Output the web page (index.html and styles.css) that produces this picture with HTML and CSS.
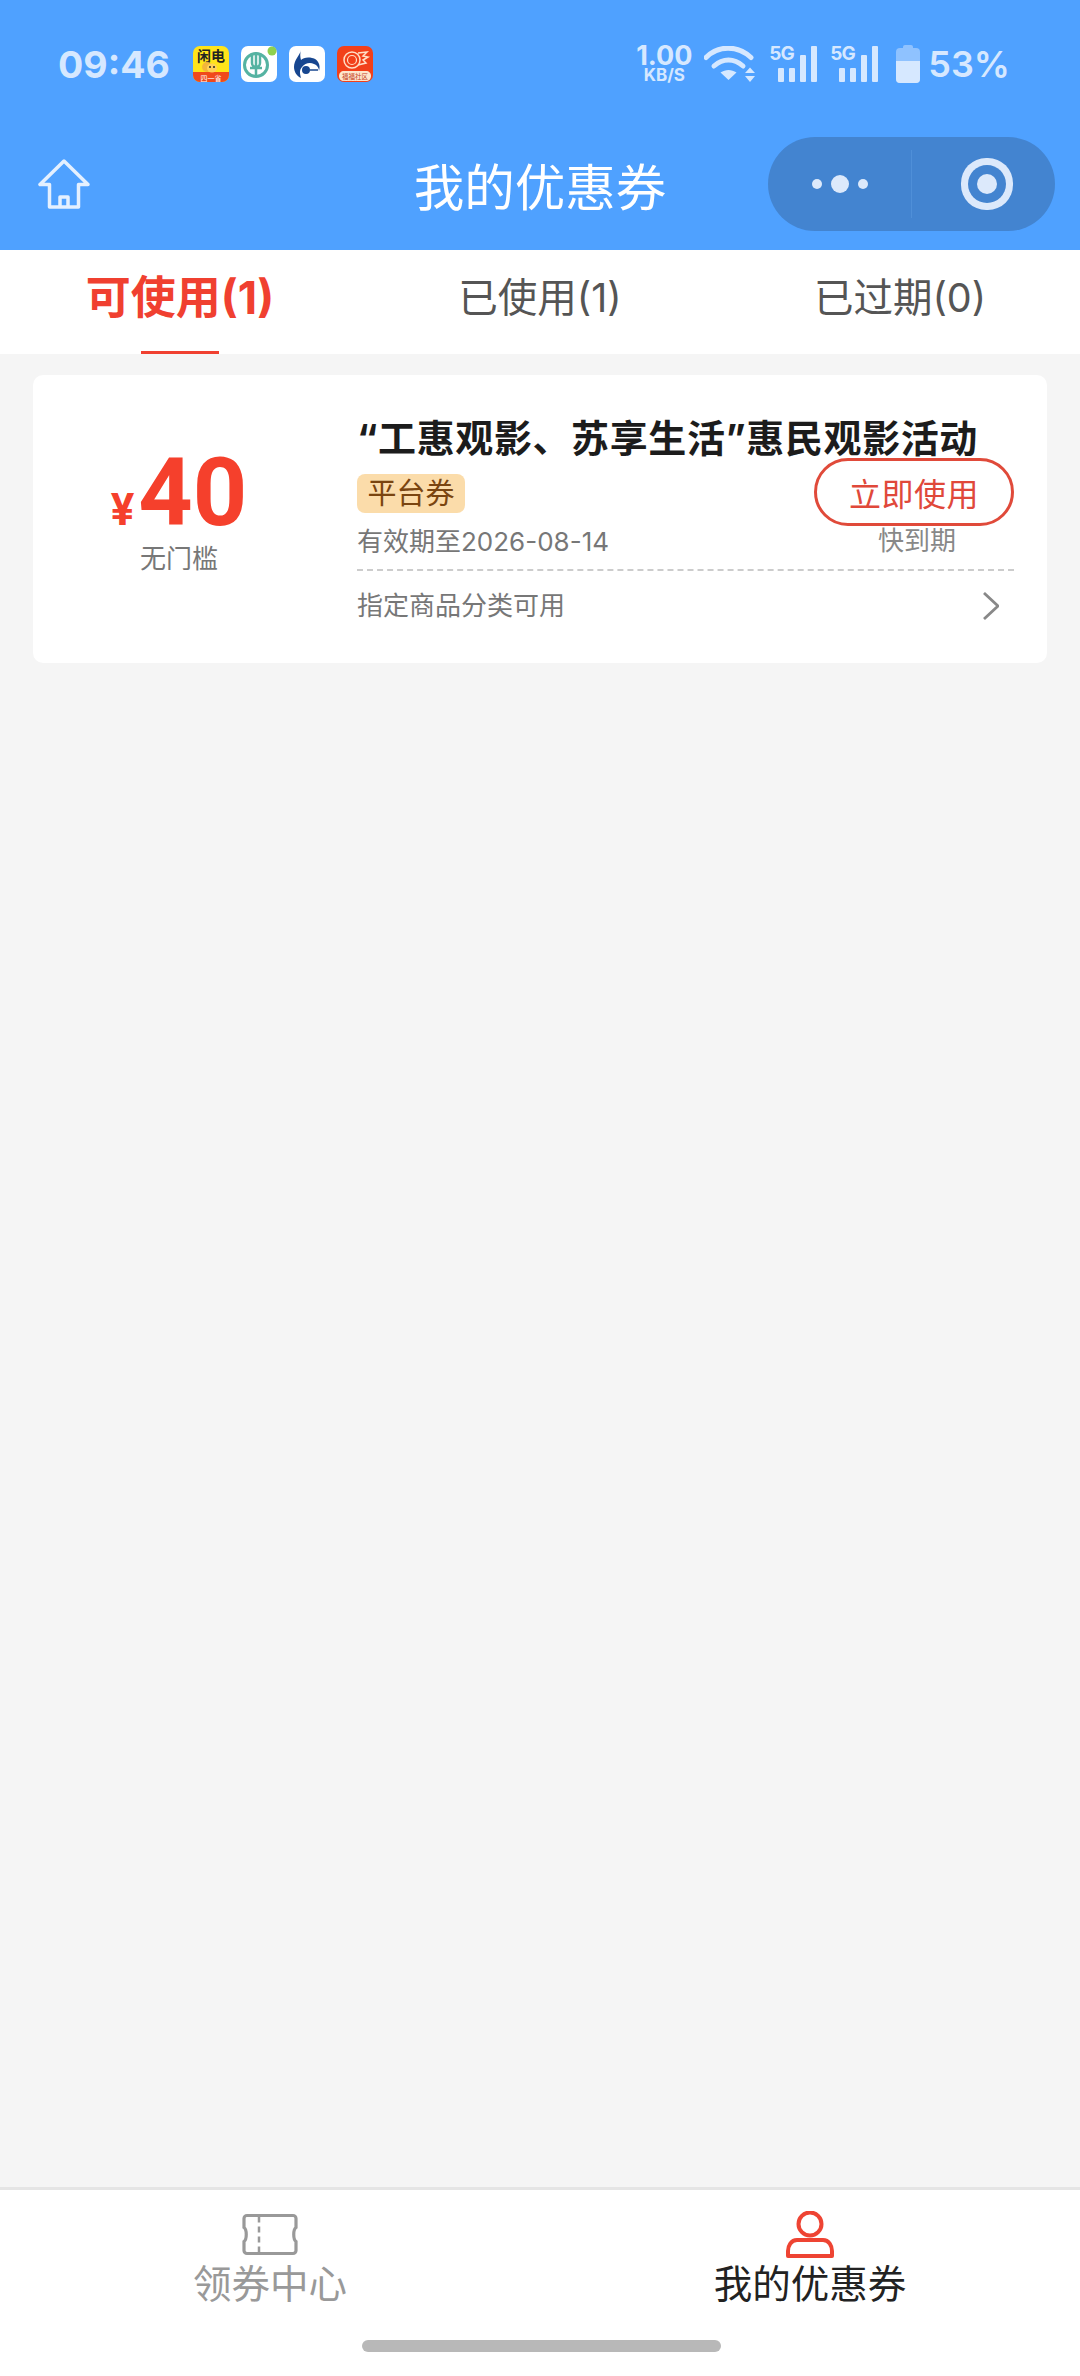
FILE: index.html
```html
<!DOCTYPE html>
<html lang="zh-CN">
<head>
    <meta charset="UTF-8">
    <meta name="viewport" content="width=device-width, initial-scale=1.0">
    <title>我的优惠券</title>
    <link rel="stylesheet" href="styles.css">
</head>
<body>
    <div class="page">
        <!-- Barra de estado + navegación -->
        <header class="header">
            <div class="status-bar">
                <span class="time">09:46</span>
                <div class="app-icons">
                    <svg class="app-icon" viewBox="0 0 36 36">
                        <rect width="36" height="36" rx="7" fill="#ffe41a"/>
                        <path d="M0 26h36v3a7 7 0 0 1-7 7H7a7 7 0 0 1-7-7z" fill="#f0491c"/>
                        <text x="18" y="15" class="app-text-dark">闲电</text>
                        <circle cx="14" cy="21" r="5" fill="#f3b63a"/>
                        <ellipse cx="19" cy="22" rx="5" ry="4.500" fill="#ffd25a"/>
                        <circle cx="17" cy="21" r="1" fill="#222"/>
                        <circle cx="21" cy="21" r="1" fill="#222"/>
                        <text x="18" y="34.500" class="app-text-light">四一省</text>
                    </svg>
                    <svg class="app-icon" viewBox="0 0 36 36">
                        <rect width="36" height="36" rx="7" fill="#fff"/>
                        <circle cx="15" cy="19" r="11.500" fill="none" stroke="#55b3a2" stroke-width="3"/>
                        <path d="M11 7v10a4 4 0 0 0 8 0V7M15 6v24M9 22h12" fill="none" stroke="#55b3a2" stroke-width="2.500"/>
                        <circle cx="31" cy="5" r="4.500" fill="#8fd14f"/>
                    </svg>
                    <svg class="app-icon" viewBox="0 0 36 36">
                        <rect width="36" height="36" rx="7" fill="#fff"/>
                        <path d="M12 4c-1 5-7 10-7 17 0 5 3 9 7 11-1-4-2-8 1-11 3-4 8-5 12-3 3 1 5 4 5 7 2-6-1-12-7-13-5-1-9 0-11 2-1-3-1-7 0-10z" fill="#17468f"/>
                        <circle cx="17" cy="24" r="4" fill="#17468f"/>
                        <path d="M21 24h8" stroke="#17468f" stroke-width="1.500"/>
                    </svg>
                    <svg class="app-icon" viewBox="0 0 36 36">
                        <rect width="36" height="36" rx="7" fill="#f2401a"/>
                        <circle cx="15" cy="14" r="8" fill="none" stroke="#ffe0c8" stroke-width="1.500"/>
                        <circle cx="15" cy="14" r="4.500" fill="none" stroke="#ffe0c8" stroke-width="1.200"/>
                        <path d="M21 7l9-1-4 4 5 1-5 3 3 3-8 2" fill="none" stroke="#ffe0c8" stroke-width="1.500"/>
                        <path d="M2 30c0-3 2-5 5-5h22c3 0 5 2 5 5 0 3-2 5-5 5H7c-3 0-5-2-5-5z" fill="#fde6cd"/>
                        <text x="18" y="33" class="app-text-red">福福社区</text>
                    </svg>
                </div>
                <div class="status-right">
                    <div class="net-speed">
                        <span class="net-value">1.00</span>
                        <span class="net-unit">KB/S</span>
                    </div>
                    <svg class="wifi" viewBox="0 0 52 36">
                        <path d="M2 11.500C14-1 34-1 47 11.500" class="wifi-arc"/>
                        <path d="M10 20c9-8 20-8 29 0" class="wifi-arc"/>
                        <path d="M24.500 34l-8-7.500c5-3.500 11-3.500 16 0z" class="wifi-fill"/>
                        <path d="M46 21.500l5 5.500H41zM46 36l5-6H41z" class="wifi-fill"/>
                    </svg>
                    <div class="signal">
                        <span class="signal-tag">5G</span>
                        <span class="bar bar-low"></span>
                        <span class="bar bar-low"></span>
                        <span class="bar bar-mid"></span>
                        <span class="bar bar-high"></span>
                    </div>
                    <div class="signal">
                        <span class="signal-tag">5G</span>
                        <span class="bar bar-low"></span>
                        <span class="bar bar-low"></span>
                        <span class="bar bar-mid"></span>
                        <span class="bar bar-high"></span>
                    </div>
                    <div class="battery">
                        <span class="battery-cap"></span>
                        <span class="battery-body"><span class="battery-level"></span></span>
                    </div>
                    <span class="battery-text">53%</span>
                </div>
            </div>
            <nav class="nav-bar">
                <svg class="home-icon" viewBox="0 0 52 50">
                    <path d="M26 2L2 25.500h9.500V48h29V25.500H50zM22 48V38h8v10" fill="none" stroke="#e4f0ff" stroke-width="3.500" stroke-linejoin="round"/>
                </svg>
                <h1 class="nav-title">我的优惠券</h1>
                <div class="capsule">
                    <div class="capsule-dots">
                        <span class="dot"></span>
                        <span class="dot dot-big"></span>
                        <span class="dot"></span>
                    </div>
                    <div class="capsule-target"><span class="target-core"></span></div>
                </div>
            </nav>
        </header>

        <!-- Pestañas -->
        <div class="tabs">
            <div class="tab tab-active">可使用(1)</div>
            <div class="tab">已使用(1)</div>
            <div class="tab">已过期(0)</div>
        </div>

        <!-- Lista de cupones -->
        <main class="coupon-list">
            <div class="coupon">
                <div class="coupon-left">
                    <div class="amount"><span class="amount-sign">¥</span><span class="amount-num">40</span></div>
                    <div class="amount-note">无门槛</div>
                </div>
                <div class="coupon-main">
                    <div class="coupon-title">“工惠观影、苏享生活”惠民观影活动</div>
                    <div class="coupon-info">
                        <div class="info-left">
                            <span class="badge">平台券</span>
                            <div class="info-date">有效期至2026-08-14</div>
                        </div>
                        <div class="info-right">
                            <button class="use-btn">立即使用</button>
                            <div class="info-expire">快到期</div>
                        </div>
                    </div>
                    <div class="coupon-scope">
                        <span>指定商品分类可用</span>
                        <svg class="chevron" viewBox="0 0 16 28">
                            <path d="M1 1l14 13L1 27" fill="none" stroke="#888" stroke-width="2.800"/>
                        </svg>
                    </div>
                </div>
            </div>
        </main>

        <!-- Barra inferior -->
        <footer class="bottom-bar">
            <div class="bottom-tabs">
                <div class="bottom-tab">
                    <svg class="bottom-icon" viewBox="0 0 56 42">
                        <path d="M5 2h46a3 3 0 0 1 3 3v9c-3 2-3 12 0 14v9a3 3 0 0 1-3 3H5a3 3 0 0 1-3-3v-9c3-2 3-12 0-14V5a3 3 0 0 1 3-3z" fill="none" stroke="#999" stroke-width="3.200"/>
                        <path d="M17 3v36" stroke="#999" stroke-width="2.500" stroke-dasharray="6 4"/>
                    </svg>
                    <span class="bottom-label">领券中心</span>
                </div>
                <div class="bottom-tab bottom-tab-active">
                    <svg class="bottom-icon" viewBox="0 0 56 47">
                        <ellipse cx="28" cy="13" rx="11.500" ry="11.500" fill="none" stroke="#ee4433" stroke-width="4"/>
                        <path d="M15 29h26c6 0 9 6 9 11v5H6v-5c0-5 3-11 9-11z" fill="none" stroke="#ee4433" stroke-width="4" stroke-linejoin="round"/>
                    </svg>
                    <span class="bottom-label">我的优惠券</span>
                </div>
            </div>
            <div class="home-bar"></div>
        </footer>
    </div>
</body>
</html>
```

FILE: styles.css
```css
body {
    margin: 0;
    font-family: "Inter", "Noto Sans CJK SC", sans-serif;
    background-color: #f5f5f5;
}

.page {
    width: 1080px;
    height: 2376px;
    display: flex;
    flex-direction: column;
}

/* Header */
.header {
    height: 250px;
    background-color: #4fa1ff;
}

.status-bar {
    height: 128px;
    display: flex;
    align-items: center;
    padding-left: 58px;
    color: #d6e8ff;
}

.time {
    font-size: 37.500px;
    font-weight: 700;
    width: 135px;
}

.app-icons {
    display: flex;
    gap: 12px;
}

.app-icon {
    width: 36px;
    height: 36px;
    display: block;
}

.app-text-dark {
    font-size: 14px;
    font-weight: 700;
    text-anchor: middle;
    fill: #222;
}

.app-text-light {
    font-size: 7px;
    text-anchor: middle;
    fill: #fff;
}

.app-text-red {
    font-size: 6.500px;
    text-anchor: middle;
    fill: #c4401c;
}

.status-right {
    margin-left: auto;
    margin-right: 70px;
    display: flex;
    align-items: center;
}

.net-speed {
    width: 54px;
    display: flex;
    flex-direction: column;
    align-items: center;
    margin-top: -1px;
}

.net-value {
    font-size: 27px;
    font-weight: 700;
    line-height: 24px;
}

.net-unit {
    font-size: 17px;
    font-weight: 700;
    line-height: 15px;
}

.wifi {
    width: 52px;
    height: 36px;
    margin-left: 13px;
}

.wifi-arc {
    fill: none;
    stroke: #d6e8ff;
    stroke-width: 5px;
    stroke-linecap: round;
}

.wifi-fill {
    fill: #d6e8ff;
}

.signal {
    position: relative;
    width: 48px;
    height: 36px;
    margin-left: 13px;
    display: flex;
    align-items: flex-end;
    justify-content: flex-end;
    gap: 5px;
}

.signal-tag {
    position: absolute;
    top: -1px;
    left: 0;
    font-size: 19px;
    font-weight: 700;
    line-height: 17px;
    letter-spacing: -1px;
}

.bar {
    width: 6px;
    background-color: #d6e8ff;
    border-radius: 1px;
}

.bar-low {
    height: 14px;
}

.bar-mid {
    height: 27px;
}

.bar-high {
    height: 36px;
}

.battery {
    width: 24px;
    margin-left: 18px;
    display: flex;
    flex-direction: column;
    align-items: center;
}

.battery-cap {
    width: 10px;
    height: 3px;
    background-color: #8fc2ff;
    border-radius: 2px 2px 0 0;
}

.battery-body {
    width: 24px;
    height: 35px;
    background-color: #8fc2ff;
    border-radius: 4px;
    display: flex;
    align-items: flex-end;
    overflow: hidden;
}

.battery-level {
    width: 100%;
    height: 22px;
    background-color: #d6e8ff;
}

.battery-text {
    font-size: 36px;
    font-weight: 600;
    margin-left: 8px;
}

.nav-bar {
    height: 112px;
    padding: 0 25px;
    display: grid;
    grid-template-columns: 1fr auto 1fr;
    align-items: center;
}

.home-icon {
    width: 52px;
    height: 50px;
    margin-left: 13px;
}

.nav-title {
    margin: 0;
    font-size: 50.500px;
    font-weight: 400;
    color: #fff;
}

.capsule {
    justify-self: end;
    width: 287px;
    height: 94px;
    border-radius: 47px;
    background-color: #4384d0;
    display: flex;
    align-items: center;
}

.capsule-dots {
    width: 143px;
    height: 68px;
    border-right: 1px solid #4f8fd8;
    display: flex;
    align-items: center;
    justify-content: center;
    gap: 9px;
}

.dot {
    width: 10px;
    height: 10px;
    border-radius: 50%;
    background-color: #dce9fb;
}

.dot-big {
    width: 18px;
    height: 18px;
}

.capsule-target {
    flex: 1;
    padding-left: 6px;
    display: flex;
    justify-content: center;
}

.target-core {
    width: 20px;
    height: 20px;
    border-radius: 50%;
    background-color: #dce9fb;
    box-shadow: 0 0 0 9px #4384d0, 0 0 0 16px #dce9fb;
    margin: 16px;
}

/* Tabs */
.tabs {
    height: 104px;
    background-color: #fff;
    display: grid;
    grid-template-columns: repeat(3, 1fr);
}

.tab {
    position: relative;
    text-align: center;
    font-size: 39.500px;
    line-height: 96px;
    color: #555;
}

.tab-active {
    font-size: 45px;
    font-weight: 700;
    color: #f04030;
}

.tab-active::after {
    content: "";
    position: absolute;
    left: 141px;
    bottom: 0;
    width: 78px;
    height: 3px;
    background-color: #f04030;
}

/* Coupon */
.coupon-list {
    flex: 1;
    padding: 21px 33px;
}

.coupon {
    height: 288px;
    background-color: #fff;
    border-radius: 10px;
    display: flex;
}

.coupon-left {
    width: 292px;
    padding-top: 73px;
    display: flex;
    flex-direction: column;
    align-items: center;
}

.amount {
    display: flex;
    align-items: baseline;
    height: 90px;
    line-height: 90px;
    font-family: "Roboto", sans-serif;
    font-weight: 700;
    color: #f5402c;
}

.amount-sign {
    font-size: 44px;
    margin-right: 4px;
}

.amount-num {
    font-size: 95px;
}

.amount-note {
    font-size: 26px;
    line-height: 42px;
    color: #777;
}

.coupon-main {
    flex: 1;
    padding: 43px 33px 0 32px;
}

.coupon-title {
    font-size: 38px;
    font-weight: 700;
    line-height: 40px;
    letter-spacing: 0.600px;
    color: #1c1c1c;
    white-space: nowrap;
}

.coupon-info {
    display: flex;
    justify-content: space-between;
}

.info-left {
    padding-top: 16px;
}

.badge {
    display: block;
    width: 108px;
    height: 39px;
    line-height: 39px;
    text-align: center;
    font-size: 29px;
    border-radius: 8px;
    background-color: #fbdcaa;
    color: #7a4510;
}

.info-date {
    margin-top: 14px;
    font-size: 26px;
    line-height: 30px;
    color: #777;
}

.info-right {
    display: flex;
    flex-direction: column;
    align-items: center;
}

.use-btn {
    width: 200px;
    height: 68px;
    padding: 0;
    border: 3px solid #e04a3a;
    border-radius: 34px;
    background: none;
    font-family: inherit;
    font-size: 32px;
    letter-spacing: 0.500px;
    color: #e0483a;
}

.info-expire {
    margin-left: 6px;
    font-size: 26px;
    line-height: 30px;
    color: #888;
}

.coupon-scope {
    margin-top: 12px;
    padding-top: 20px;
    border-top: 2px dashed #ccc;
    display: flex;
    justify-content: space-between;
    align-items: center;
    font-size: 26px;
    line-height: 30px;
    color: #777;
}

.chevron {
    width: 16px;
    height: 28px;
    margin-right: 15px;
}

/* Bottom bar */
.bottom-bar {
    height: 189px;
    box-sizing: border-box;
    background-color: #fff;
    border-top: 3px solid #e5e5e5;
    position: relative;
}

.bottom-tabs {
    display: grid;
    grid-template-columns: 1fr 1fr;
    padding-top: 21px;
}

.bottom-tab {
    display: flex;
    flex-direction: column;
    align-items: center;
}

.bottom-icon {
    width: 56px;
    height: 47px;
    display: block;
}

.bottom-label {
    font-size: 38.500px;
    line-height: 52px;
    color: #999;
}

.bottom-tab-active .bottom-label {
    color: #222;
}

.home-bar {
    position: absolute;
    left: 362px;
    top: 150px;
    width: 359px;
    height: 12px;
    border-radius: 6px;
    background-color: #b8b8b8;
}
```
